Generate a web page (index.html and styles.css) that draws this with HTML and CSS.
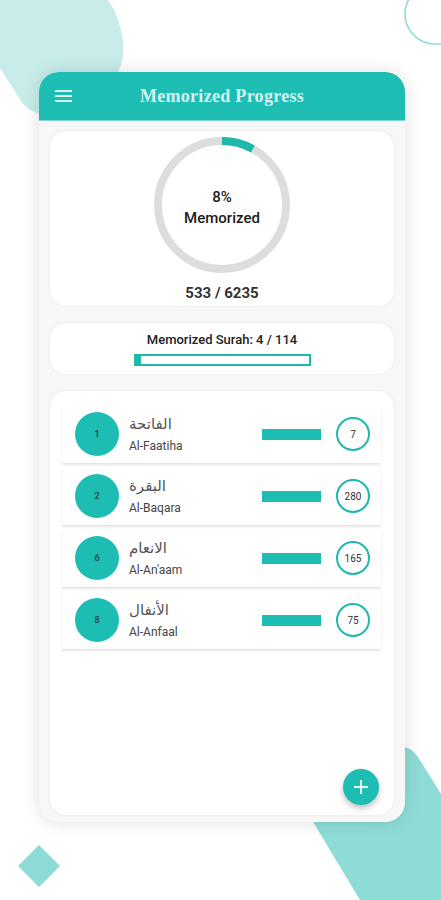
FILE: index.html
```html
<!DOCTYPE html>
<html>
<head>
<meta charset="utf-8">
<link rel="stylesheet" href="styles.css">
</head>
<body>
<svg class="bg" width="441" height="900" viewBox="0 0 441 900">
  <path d="M0 -10 L92 -10 Q112 -6 121 30 Q129 60 112 82 L52 112 Q36 118 23 104 L0 68 Z" fill="#c7ecea"/>
  <circle cx="435" cy="14" r="30" fill="none" stroke="#8edcd4" stroke-width="1.6"/>
  <path d="M271 752 L398 746 Q411 746 418 757 L441 794 L441 900 L360 900 Z" fill="#8edcd6"/>
  <path d="M39 845 L60 866 L39 887 L18 866 Z" fill="#8ddbd6"/>
</svg>
<div class="phone">
  <div class="header">
    <svg class="menu" width="18" height="14" viewBox="0 0 18 14">
      <rect x="0" y="1" width="17" height="2" fill="#d5f1ee"/>
      <rect x="0" y="6" width="17" height="2" fill="#d5f1ee"/>
      <rect x="0" y="11" width="17" height="2" fill="#d5f1ee"/>
    </svg>
    <div class="title">Memorized Progress</div>
  </div>
  <div class="content">
    <div class="card summary">
      <div class="ring">
        <svg width="136" height="136" viewBox="0 0 136 136">
          <circle cx="68" cy="68" r="64" fill="none" stroke="#dddddd" stroke-width="8"/>
          <circle cx="68" cy="68" r="64" fill="none" stroke="#1fb8ad" stroke-width="8" stroke-dasharray="32.2 400" transform="rotate(-90 68 68)"/>
        </svg>
        <div class="ring-text">8%<br>Memorized</div>
      </div>
      <div class="total">533 / 6235</div>
    </div>
    <div class="card surah">
      <div class="surah-label">Memorized Surah: 4 / 114</div>
      <div class="bar"><div class="bar-fill" style="width:3%"></div></div>
    </div>
    <div class="card list">
      <div class="item">
        <div class="num">1</div>
        <div class="names"><div class="ar">الفاتحة</div><div class="en">Al-Faatiha</div></div>
        <div class="prog"></div>
        <div class="count">7</div>
      </div>
      <div class="item">
        <div class="num">2</div>
        <div class="names"><div class="ar">البقرة</div><div class="en">Al-Baqara</div></div>
        <div class="prog"></div>
        <div class="count">280</div>
      </div>
      <div class="item">
        <div class="num">6</div>
        <div class="names"><div class="ar">الانعام</div><div class="en">Al-An'aam</div></div>
        <div class="prog"></div>
        <div class="count">165</div>
      </div>
      <div class="item">
        <div class="num">8</div>
        <div class="names"><div class="ar">الأنفال</div><div class="en">Al-Anfaal</div></div>
        <div class="prog"></div>
        <div class="count">75</div>
      </div>
      <div class="fab">
        <svg width="14" height="14" viewBox="0 0 14 14"><rect x="6" y="0" width="2" height="14" fill="#e6f7f5"/><rect x="0" y="6" width="14" height="2" fill="#e6f7f5"/></svg>
      </div>
    </div>
  </div>
</div>
</body>
</html>
```

FILE: styles.css
```css
* { box-sizing: border-box; }
html, body { margin: 0; padding: 0; }
body {
  width: 441px;
  height: 900px;
  background: #ffffff;
  position: relative;
  overflow: hidden;
  font-family: Roboto, "Noto Sans", sans-serif;
  padding: 72px 0 0 39px;
}
.bg { position: absolute; left: 0; top: 0; z-index: 0; }
.phone {
  position: relative;
  z-index: 1;
  width: 366px;
  height: 750px;
  border-radius: 20px;
  background: #f7f7f7;
  box-shadow: 0 0 18px rgba(0,0,0,0.13);
  display: flex;
  flex-direction: column;
  overflow: hidden;
}
.header {
  height: 49px;
  background: #1ebdb3;
  border-bottom: 1px solid #7fd9d2;
  display: flex;
  align-items: center;
  padding-left: 16px;
  position: relative;
}
.menu { display: block; }
.title {
  flex: 1;
  text-align: center;
  padding-right: 34px;
  font-family: "Liberation Serif", "DejaVu Serif", serif;
  font-weight: bold;
  font-size: 18px;
  color: #d6f1ee;
  letter-spacing: 0.3px;
}
.content {
  flex: 1;
  display: flex;
  flex-direction: column;
  padding: 10px 11px 7px 11px;
  gap: 17px;
}
.card {
  background: #ffffff;
  border-radius: 16px;
  box-shadow: 0 0 3px rgba(0,0,0,0.08);
}
.summary {
  height: 175px;
  display: flex;
  flex-direction: column;
  align-items: center;
  padding-top: 6px;
}
.ring {
  width: 136px;
  height: 136px;
  position: relative;
}
.ring svg { display: block; }
.ring-text {
  position: absolute;
  left: 0; top: 0; right: 0; bottom: 0;
  display: flex;
  align-items: center;
  justify-content: center;
  text-align: center;
  font-size: 15px;
  font-weight: 500;
  line-height: 21px;
  color: #1c1c1c;
  padding-top: 6px;
}
.total {
  margin-top: 11px;
  font-size: 15px;
  font-weight: 700;
  color: #333;
}
.surah {
  height: 51px;
  display: flex;
  flex-direction: column;
  align-items: center;
  padding-top: 9px;
}
.surah-label {
  font-size: 13px;
  font-weight: 500;
  color: #222;
  line-height: 16px;
}
.bar {
  margin-top: 6px;
  width: 177px;
  height: 12px;
  border: 2px solid #1fb8ad;
  background: #fff;
}
.bar-fill { height: 100%; background: #1fb8ad; }
.list {
  flex: 1;
  padding: 14px 13px 0 12px;
  display: flex;
  flex-direction: column;
  gap: 4px;
  position: relative;
}
.item {
  height: 58px;
  background: #fff;
  box-shadow: 0 2px 2px rgba(0,0,0,0.10), 0 0 1px rgba(0,0,0,0.06);
  display: flex;
  align-items: center;
  padding-left: 13px;
  padding-right: 11px;
}
.num {
  width: 44px;
  height: 44px;
  border-radius: 50%;
  background: #1ebdb3;
  display: flex;
  align-items: center;
  justify-content: center;
  font-size: 9px;
  font-weight: 500;
  color: #17413e;
}
.names {
  margin-left: 10px;
  flex: 1;
  display: flex;
  flex-direction: column;
  align-items: flex-start;
}
.ar {
  font-family: "DejaVu Sans", sans-serif;
  font-size: 15px;
  color: #555;
  line-height: 20px;
  direction: rtl;
}
.en {
  font-size: 12px;
  color: #444;
  line-height: 16px;
  margin-top: 4px;
}
.prog {
  width: 59px;
  height: 11px;
  background: #1ebdb3;
  margin-right: 15px;
}
.count {
  width: 34px;
  height: 34px;
  border-radius: 50%;
  border: 2px solid #1fb8ad;
  display: flex;
  align-items: center;
  justify-content: center;
  font-size: 10px;
  color: #333;
}
.fab {
  position: absolute;
  right: 15px;
  bottom: 10px;
  width: 36px;
  height: 36px;
  border-radius: 50%;
  background: #1ebdb3;
  box-shadow: 0 3px 6px rgba(0,0,0,0.25);
  display: flex;
  align-items: center;
  justify-content: center;
}
.fab svg { display: block; }
```
